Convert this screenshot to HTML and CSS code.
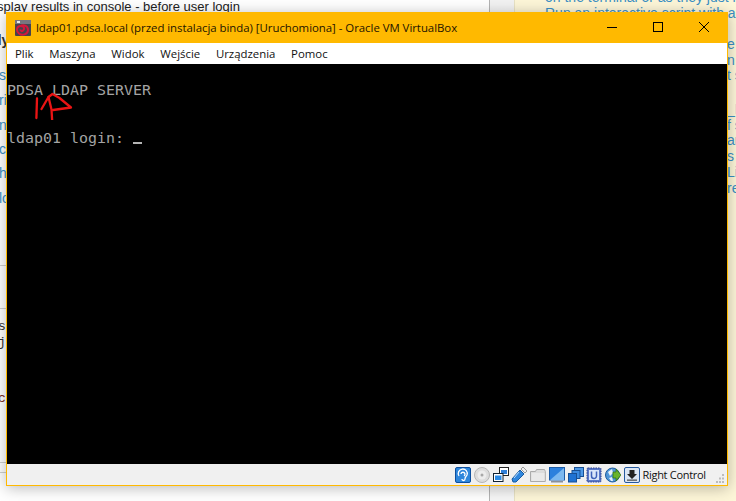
FILE: index.html
```html
<!DOCTYPE html>
<html lang="pl">
<head>
<meta charset="utf-8">
<title>ldap01.pdsa.local</title>
<link rel="stylesheet" href="styles.css">
</head>
<body>
<div class="desktop">
  <main class="article">
    <p class="headline">display results in console - before user login</p>
    <div class="article-body">
      <p class="bold-word">dy</p>
      <p class="blue r1">s</p>
      <p class="blue r2">ri</p>
      <p class="blue r3">n</p>
      <p class="blue r4">c</p>
      <p class="blue r5">h</p>
      <p class="blue r6">lc</p>
    </div>
    <hr class="rule rule-a">
    <hr class="rule rule-b">
    <pre class="code c1">s</pre>
    <pre class="code c2">j</pre>
    <pre class="code c3">c</pre>
    <hr class="rule rule-c">
    <hr class="rule rule-d">
  </main>
  <div class="gutter"></div>
  <aside class="aside">
    <p class="aside-top">on the terminal or as they just ran</p>
    <ul class="aside-list"><li>Run an interactive script with admin</li></ul>
    <div class="aside-slivers">
      <p>e</p><p>n</p><p>t s</p><p class="gap">_Li</p><p>f s</p><p>ar</p><p>s</p><p>Li</p><p>re</p>
    </div>
  </aside>

  <section class="vm-window">
    <header class="titlebar">
      <svg class="app-icon" viewBox="0 0 16 16" aria-hidden="true">
        <rect width="16" height="16" rx="1" fill="#45424c"/>
        <rect x="0" y="0" width="16" height="4" fill="#77767f"/>
        <rect x="2" y="1" width="3" height="2" fill="#e8e8e8"/>
        <path d="M5 6.500c3-2.500 8-1 8 3.500s-6 6-9 3.500-2.500-7 1-7.500 5 2 3.500 4-3 1-3-.5" fill="none" stroke="#d5173c" stroke-width="2"/>
      </svg>
      <span class="title">ldap01.pdsa.local (przed instalacja binda) [Uruchomiona] - Oracle VM VirtualBox</span>
      <div class="win-controls">
        <svg class="ctl" viewBox="0 0 46 31" aria-hidden="true"><path d="M18 15.500h10" stroke="#000" fill="none"/></svg>
        <svg class="ctl" viewBox="0 0 46 31" aria-hidden="true"><rect x="18.500" y="10.500" width="9" height="9" stroke="#000" fill="none"/></svg>
        <svg class="ctl" viewBox="0 0 46 31" aria-hidden="true"><path d="M18 10l10 10M28 10l-10 10" stroke="#000" fill="none"/></svg>
      </div>
    </header>
    <nav class="menubar">
      <span>Plik</span><span>Maszyna</span><span>Widok</span><span>Wejście</span><span>Urządzenia</span><span>Pomoc</span>
    </nav>
    <div class="screen">
      <pre class="console">

PDSA LDAP SERVER


ldap01 login: <span class="cursor"></span></pre>
      <svg class="scribble" viewBox="0 0 80 40" aria-hidden="true">
        <path d="M30 18.500l-.6 19.500" />
        <path d="M34.500 29l7-12 4-3 7 4 11.500 9.500-18 2.500" />
        <path d="M41.500 17l3 12.500.7 11.500" />
      </svg>
    </div>
    <footer class="statusbar">
      <svg class="ico" viewBox="0 0 16 16" aria-hidden="true"><rect x=".5" y=".5" width="15" height="15" rx="1.500" fill="#2d86dc" stroke="#0d4f9e"/><path d="M4 9a4.500 4.500 0 1 1 8-1c-1 2-2 2-2 4s-3 2-3 0M6 7a2 2 0 1 1 3 2" fill="none" stroke="#fff" stroke-width="1.300"/></svg>
      <svg class="ico" viewBox="0 0 16 16" aria-hidden="true"><circle cx="8" cy="8" r="7.500" fill="#dcdcdc" stroke="#b5b5b5"/><circle cx="8" cy="8" r="4.500" fill="#ececec"/><circle cx="8" cy="8" r="1.500" fill="#a8a8a8"/></svg>
      <svg class="ico" viewBox="0 0 16 16" aria-hidden="true"><rect x="6.500" y=".5" width="9" height="8" fill="#fff" stroke="#222"/><rect x="8" y="3" width="6" height="4" fill="#2f7fd8"/><rect x=".5" y="6.500" width="9.500" height="8" fill="#fff" stroke="#123"/><rect x="2" y="8.500" width="6.500" height="4.500" fill="#2a8ae6"/></svg>
      <svg class="ico" viewBox="0 0 16 16" aria-hidden="true"><path d="M1 12L9 3l4 4-8 8H2z" fill="#2f86dd" stroke="#175a9f"/><path d="M10 2l2-2 4 4-2 2z" fill="#eee" stroke="#777" stroke-width=".7"/><path d="M3 11l5-6" stroke="#b8dcff" fill="none"/></svg>
      <svg class="ico" viewBox="0 0 16 16" aria-hidden="true"><path d="M.5 4.500h5l1-2h8l.8 2v10H.5z" fill="#dcdcdc" stroke="#aaa"/><path d="M1.500 6h13v8h-13z" fill="#e9e9e9"/></svg>
      <svg class="ico" viewBox="0 0 16 16" aria-hidden="true"><rect x=".5" y=".5" width="15" height="12.500" fill="#2c80dd" stroke="#1b5ca8"/><path d="M1 13L15 1v12z" fill="#7cb8f0"/><rect x="2" y="14" width="12" height="1.500" fill="#8a8f98"/></svg>
      <svg class="ico" viewBox="0 0 16 16" aria-hidden="true"><rect x="6.500" y=".5" width="9" height="9" fill="#4f9ae8" stroke="#174f94"/><rect x="4" y="3.500" width="8" height="8" fill="#3a8ae0" stroke="#174f94"/><rect x=".5" y="6.500" width="8" height="8.500" fill="#1f72d2" stroke="#174f94"/></svg>
      <svg class="ico" viewBox="0 0 16 16" aria-hidden="true"><rect x="1" y="1" width="14" height="14" rx="1" fill="#5a78c8" stroke="#2a3f8f" stroke-dasharray="1.500 1"/><rect x="3" y="3" width="10" height="10" fill="#d9e6fa"/><path d="M5.500 4.500v4.500a2.500 2.500 0 0 0 5 0V4.500" fill="none" stroke="#3f62b8" stroke-width="1.500"/></svg>
      <svg class="ico" viewBox="0 0 16 16" aria-hidden="true"><circle cx="7.500" cy="8" r="7" fill="#4f96d8" stroke="#1e5a9a"/><path d="M3 5l4-3 1 4-3 3zM4 11l3-1 1 4H6z" fill="#e8f2fb"/><path d="M8 5h3V2l5 6-5 6v-3H8z" fill="#68b42c" stroke="#2d6e10" stroke-width=".7"/></svg>
      <svg class="ico" viewBox="0 0 16 16" aria-hidden="true"><rect x=".5" y=".5" width="15" height="15" rx="1.500" fill="#dbe6f4" stroke="#25599e"/><path d="M5.500 3h5v4H13l-5 5-5-5h2.500z" fill="#222"/><rect x="3" y="12.500" width="10" height="1.300" fill="#555"/></svg>
      <span class="hostkey">Right Control</span>
      <svg class="grip" viewBox="0 0 10 10" aria-hidden="true"><path d="M7 0h2v2H7zM4 3.500h2v2H4zM7 3.500h2v2H7zM1 7h2v2H1zM4 7h2v2H4zM7 7h2v2H7z" fill="#bcbcbc"/></svg>
    </footer>
  </section>
</div>
</body>
</html>
```

FILE: styles.css
```css
* { box-sizing: border-box; }
html, body { margin: 0; padding: 0; }
body { width: 736px; height: 501px; overflow: hidden; background: #fff; font-family: "Liberation Sans", Arial, sans-serif; }
p, pre { margin: 0; }

.desktop { position: relative; display: flex; width: 736px; height: 501px; overflow: hidden; }

/* background browser page */
.article { width: 490px; flex: none; border-right: 1px solid #b4b4b4; display: flex; flex-direction: column; overflow: hidden; }
.headline { margin: -1px 0 0 -13px; font-size: 13px; line-height: 16px; color: #222; white-space: nowrap; }
.article-body { margin: 17px 0 0 -7px; font-size: 14px; line-height: 17px; }
.bold-word { font-weight: 700; color: #333; }
.blue { color: #3a8fc4; margin-left: 6px; }
.r1 { margin-top: 18px; }
.r2 { margin-top: 8px; }
.r3 { margin-top: 8px; }
.r4 { margin-top: 7px; }
.r5 { margin-top: 7px; }
.r6 { margin-top: 8px; }
.rule { border: 0; height: 1px; background: #cfcfcf; margin: 0; width: 100%; flex: none; }
.rule-a { margin-top: 58px; }
.rule-b { margin-top: 42px; }
.code { font-family: "Liberation Mono", monospace; font-size: 13px; line-height: 16px; color: #333; margin-left: -2px; }
.c1 { margin-top: 10px; }
.c2 { margin-top: 0; }
.c3 { margin-top: 40px; color: #7a2a20; }
.rule-c { margin-top: 55px; }
.rule-d { margin-top: 9px; }

.gutter { width: 24px; flex: none; background: linear-gradient(#f2f2f2, #f6f6f6); }
.aside { flex: 1; background: #fdf6d8; border-left: 1px solid #e8e2c4; overflow: hidden; font-size: 14px; line-height: 16px; color: #3a8fc4; white-space: nowrap; }
.aside-top { margin: -11px 0 0 30px; }
.aside-list { margin: 0; padding: 0 0 0 30px; }
.aside-list li::marker { color: #222; }
.aside-slivers { margin: 16px 0 0 212px; display: flex; flex-direction: column; }
.aside-slivers p { height: 15.700px; line-height: 15.700px; }
.aside-slivers .gap { margin-top: 18px; }

/* VM window */
.vm-window { position: absolute; left: 6px; top: 12px; width: 722px; height: 474px; display: flex; flex-direction: column; border: 1px solid #ffb900; border-top: 0; background: #f0f0f0; box-shadow: 0 2px 14px rgba(0,0,0,.28); }
.titlebar { flex: none; height: 31px; margin: 0 -1px; background: #ffb900; display: flex; align-items: center; padding: 0 1px 0 9px; }
.app-icon { width: 16px; height: 16px; flex: none; }
.title { margin-left: 5px; font-family: "Open Sans", sans-serif; font-size: 11.420px; color: #1d1400; white-space: nowrap; letter-spacing: -.03px; }
.win-controls { margin-left: auto; display: flex; }
.ctl { width: 46px; height: 31px; display: block; }
.menubar { flex: none; height: 21px; background: #fff; display: flex; align-items: center; gap: 15.700px; padding-left: 8px; font-family: "Open Sans", sans-serif; font-size: 11.400px; color: #111; }
.screen { position: relative; flex: none; height: 400px; background: #000; }
.console { padding-top: 2px; font-family: "DejaVu Sans Mono", monospace; font-size: 14.950px; line-height: 16px; color: #a4a4a4; }
.cursor { display: inline-block; width: 9px; height: 2px; background: #b4b4b4; vertical-align: -1px; }
.scribble { position: absolute; left: 0; top: 16px; width: 80px; height: 40px; fill: none; stroke: #ea1414; stroke-width: 2.300; stroke-linecap: round; stroke-linejoin: round; }
.statusbar { flex: 1; background: #f0f0f0; display: flex; align-items: center; gap: 2.750px; padding: 0 2px 0 448px; }
.ico { width: 16px; height: 16px; flex: none; }
.hostkey { font-family: "Open Sans", sans-serif; font-size: 11px; letter-spacing: -.3px; color: #111; white-space: nowrap; }
.grip { width: 10px; height: 10px; margin: 8px 0 0 auto; flex: none; }
```
